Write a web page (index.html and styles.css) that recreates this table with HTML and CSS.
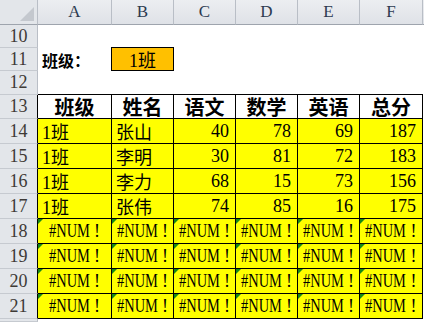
FILE: index.html
```html
<!DOCTYPE html>
<html>
<head>
<meta charset="utf-8">
<link rel="stylesheet" href="styles.css">
</head>
<body>
<div class="sheet">
  <div class="corner"><span class="tri"></span></div>
  <div class="ch">A</div><div class="ch">B</div><div class="ch">C</div><div class="ch">D</div><div class="ch">E</div><div class="ch">F</div><div class="ch end"></div>

  <div class="rh">10</div><div class="blank span"></div>
  <div class="rh">11</div><div class="blank lbl">班级：</div><div class="pick">1班</div><div class="blank rest"></div>
  <div class="rh">12</div><div class="blank span top"></div>

  <div class="rh tb">13</div>
  <div class="c hd">班级</div><div class="c hd">姓名</div><div class="c hd">语文</div><div class="c hd">数学</div><div class="c hd">英语</div><div class="c hd">总分</div><div class="blank"></div>

  <div class="rh tb">14</div>
  <div class="c y l">1班</div><div class="c y l">张山</div><div class="c y r">40</div><div class="c y r">78</div><div class="c y r">69</div><div class="c y r">187</div><div class="blank"></div>
  <div class="rh tb">15</div>
  <div class="c y l">1班</div><div class="c y l">李明</div><div class="c y r">30</div><div class="c y r">81</div><div class="c y r">72</div><div class="c y r">183</div><div class="blank"></div>
  <div class="rh tb">16</div>
  <div class="c y l">1班</div><div class="c y l">李力</div><div class="c y r">68</div><div class="c y r">15</div><div class="c y r">73</div><div class="c y r">156</div><div class="blank"></div>
  <div class="rh tb">17</div>
  <div class="c y l">1班</div><div class="c y l">张伟</div><div class="c y r">74</div><div class="c y r">85</div><div class="c y r">16</div><div class="c y r">175</div><div class="blank"></div>

  <div class="rh tb">18</div>
  <div class="c y e"><span class="num">#NUM</span><span class="bang">!</span></div><div class="c y e"><span class="num">#NUM</span><span class="bang">!</span></div><div class="c y e"><span class="num">#NUM</span><span class="bang">!</span></div><div class="c y e"><span class="num">#NUM</span><span class="bang">!</span></div><div class="c y e"><span class="num">#NUM</span><span class="bang">!</span></div><div class="c y e"><span class="num">#NUM</span><span class="bang">!</span></div><div class="blank"></div>
  <div class="rh tb">19</div>
  <div class="c y e"><span class="num">#NUM</span><span class="bang">!</span></div><div class="c y e"><span class="num">#NUM</span><span class="bang">!</span></div><div class="c y e"><span class="num">#NUM</span><span class="bang">!</span></div><div class="c y e"><span class="num">#NUM</span><span class="bang">!</span></div><div class="c y e"><span class="num">#NUM</span><span class="bang">!</span></div><div class="c y e"><span class="num">#NUM</span><span class="bang">!</span></div><div class="blank"></div>
  <div class="rh tb">20</div>
  <div class="c y e"><span class="num">#NUM</span><span class="bang">!</span></div><div class="c y e"><span class="num">#NUM</span><span class="bang">!</span></div><div class="c y e"><span class="num">#NUM</span><span class="bang">!</span></div><div class="c y e"><span class="num">#NUM</span><span class="bang">!</span></div><div class="c y e"><span class="num">#NUM</span><span class="bang">!</span></div><div class="c y e"><span class="num">#NUM</span><span class="bang">!</span></div><div class="blank"></div>
  <div class="rh tb">21</div>
  <div class="c y e"><span class="num">#NUM</span><span class="bang">!</span></div><div class="c y e"><span class="num">#NUM</span><span class="bang">!</span></div><div class="c y e"><span class="num">#NUM</span><span class="bang">!</span></div><div class="c y e"><span class="num">#NUM</span><span class="bang">!</span></div><div class="c y e"><span class="num">#NUM</span><span class="bang">!</span></div><div class="c y e"><span class="num">#NUM</span><span class="bang">!</span></div><div class="blank"></div>

  <div class="rh"></div><div class="blank span"></div>
</div>
</body>
</html>
```

FILE: styles.css
```css
html, body {
  margin: 0;
  padding: 0;
  background: #ffffff;
}
.sheet {
  width: 424px;
  height: 322px;
  overflow: hidden;
  display: grid;
  grid-template-columns: 38px 74px 62px 62px 62px 62px 63px 1fr;
  grid-template-rows: 25px 23px 23px 24px 24px repeat(8, 25px) 1fr;
  font-family: "Liberation Serif", "Noto Sans CJK SC", serif;
  font-size: 18px;
  color: #000;
}
.sheet > div {
  box-sizing: border-box;
  min-width: 0;
  white-space: nowrap;
}
.corner {
  background: #e3e6ea;
  border-right: 1px solid #b9bec6;
  border-bottom: 1px solid #9ea4ad;
  position: relative;
}
.tri {
  position: absolute;
  right: 3px;
  bottom: 3px;
  width: 0;
  height: 0;
  border-style: solid;
  border-width: 0 0 14px 14px;
  border-color: transparent transparent #c4c8ce transparent;
}
.ch {
  background: linear-gradient(#eceef1, #dfe2e7);
  border-right: 1px solid #b9bec6;
  border-bottom: 1px solid #9ea4ad;
  color: #2c3a50;
  font-size: 17px;
  display: flex;
  align-items: center;
  justify-content: center;
}
.ch.end {
  border-right: none;
}
.rh {
  background: #e3e6ea;
  border-right: 1px solid #b9bec6;
  border-bottom: 1px solid #c6cad0;
  color: #3e3a36;
  font-size: 18px;
  display: flex;
  align-items: center;
  justify-content: center;
  grid-column: 1;
}
.rh.tb {
  border-right-color: #000;
}
.blank {
  background: #fff;
}
.span {
  grid-column: 2 / -1;
}
.span.top {
  grid-column: 2 / 8;
  border-bottom: 1px solid #000;
}
.rest {
  grid-column: 4 / -1;
}
.lbl {
  font-weight: bold;
  font-family: "Noto Sans CJK SC", sans-serif;
  font-size: 16px;
  display: flex;
  align-items: center;
  padding-left: 4px;
}
.pick {
  background: #ffc000;
  border: 1px solid #000;
  margin: -1px 0 0 -1px;
  display: flex;
  align-items: center;
  justify-content: center;
  font-size: 18px;
}
.c {
  border-right: 1px solid #000;
  border-bottom: 1px solid #000;
  display: flex;
  align-items: center;
  position: relative;
}
.hd {
  background: #fff;
  justify-content: center;
  font-family: "Noto Sans CJK SC", sans-serif;
  font-weight: bold;
  font-size: 20px;
}
.y {
  background: #ffff00;
}
.l {
  padding-left: 4px;
}
.r {
  justify-content: flex-end;
  padding-right: 6px;
}
.e {
  justify-content: center;
  font-size: 18px;
}
.e::before {
  content: "";
  position: absolute;
  left: 0;
  top: 0;
  border-style: solid;
  border-width: 5px 5px 0 0;
  border-color: #168a16 transparent transparent transparent;
}
.num {
  display: inline-block;
  transform: scaleX(0.8);
  margin: 0 -5px;
}
.bang {
  margin-left: 4px;
}
```
